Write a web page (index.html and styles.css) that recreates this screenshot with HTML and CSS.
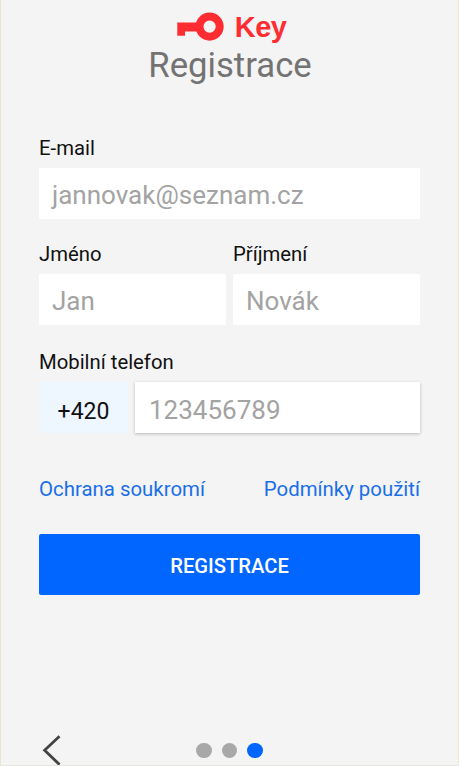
FILE: index.html
```html
<!DOCTYPE html>
<html lang="cs">
<head>
<meta charset="utf-8">
<title>Registrace</title>
<link rel="stylesheet" href="styles.css">
</head>
<body>
<main class="screen">
  <header class="header">
    <div class="brand">
      <svg class="brand-icon" width="48" height="30" viewBox="0 0 48 30" aria-hidden="true">
        <path d="M0.3 10.4H20V19.6H8V23.8H0.3Z" fill="#ff2d31"/>
        <circle cx="32.6" cy="14.6" r="10.1" fill="none" stroke="#ff2d31" stroke-width="8"/>
      </svg>
      <span class="brand-name">Key</span>
    </div>
    <h1 class="title">Registrace</h1>
  </header>
  <form class="form">
    <div class="group">
      <div class="label">E-mail</div>
      <div class="field"><span class="hint">jannovak@seznam.cz</span></div>
    </div>
    <div class="row names">
      <div class="group">
        <div class="label">Jméno</div>
        <div class="field"><span class="hint">Jan</span></div>
      </div>
      <div class="group">
        <div class="label">Příjmení</div>
        <div class="field"><span class="hint">Novák</span></div>
      </div>
    </div>
    <div class="group phone">
      <div class="label">Mobilní telefon</div>
      <div class="row phone-row">
        <div class="prefix">+420</div>
        <div class="field raised"><span class="hint">123456789</span></div>
      </div>
    </div>
    <div class="links">
      <a class="link">Ochrana soukromí</a>
      <a class="link">Podmínky použití</a>
    </div>
    <div class="submit" role="button">REGISTRACE</div>
  </form>
  <footer class="footer">
    <svg class="back" width="22" height="30" viewBox="0 0 22 30" aria-hidden="true">
      <path d="M18.5 1.2L3.6 15.2L18.5 29.6" fill="none" stroke="#444" stroke-width="2.8"/>
    </svg>
    <div class="dots"><i class="dot"></i><i class="dot"></i><i class="dot active"></i></div>
  </footer>
</main>
</body>
</html>
```
FILE: styles.css
```css
* { box-sizing: border-box; }
body {
  margin: 0;
  font-family: Roboto, "Liberation Sans", sans-serif;
  background: #f4f4f4;
}
.screen {
  display: flex;
  flex-direction: column;
  height: 766px;
  padding: 0 38px;
  border: solid #e6e6e1;
  border-width: 0 1px 1px;
  border-left-color: #ece4cb;
  border-right-color: #e9e6d2;
  background: #f4f4f4;
  overflow: hidden;
}
.header { height: 133px; padding-top: 12px; }
.brand { display: flex; justify-content: center; height: 30px; padding-left: 4px; gap: 10px; }
.brand-icon { flex: none; }
.brand-name {
  font: bold 29px/30px "Liberation Sans", sans-serif;
  letter-spacing: -0.6px;
  color: #ff2d31;
}
.title {
  margin: 2px 0 0;
  padding-left: 1px;
  font-size: 34.7px;
  font-weight: 400;
  line-height: 42px;
  color: #737373;
  text-align: center;
}
.label { height: 35px; padding-top: 1px; line-height: 28px; font-size: 20.3px; color: #111; white-space: nowrap; }
.field {
  display: flex;
  align-items: center;
  height: 51px;
  padding: 2px 13px 0;
  background: #fff;
}
.hint { font-size: 26px; line-height: 36px; color: #a3a3a3; white-space: nowrap; }
.row { display: grid; }
.names { grid-template-columns: 187px 187px; gap: 7px; margin-top: 20px; }
.phone { margin-top: 22px; }
.phone-row { grid-template-columns: 89px 285px; gap: 7px; }
.raised { padding: 4px 13px 0 14px; box-shadow: 0 1px 3px rgba(0, 0, 0, .25); }
.prefix {
  height: 51px;
  padding-top: 4px;
  background: #eef6ff;
  color: #111;
  font-size: 23px;
  line-height: 52px;
  text-align: center;
}
.links { display: flex; justify-content: space-between; margin-top: 41px; }
.link { font-size: 20.4px; line-height: 30px; color: #1a6fe8; }
.submit {
  height: 61px;
  margin-top: 30px;
  border-radius: 2px;
  background: #0066ff;
  color: #fff;
  font-size: 20.2px;
  font-weight: 500;
  line-height: 64px;
  text-align: center;
}
.footer { display: flex; margin-top: auto; height: 30px; }
.back { flex: none; margin-left: 2px; }
.dots { display: flex; gap: 10px; margin: 7.5px 0 0 133px; }
.dot { flex: none; width: 15.5px; height: 15.5px; border-radius: 50%; background: #a8a8a8; }
.active { background: #0066ff; }
```
